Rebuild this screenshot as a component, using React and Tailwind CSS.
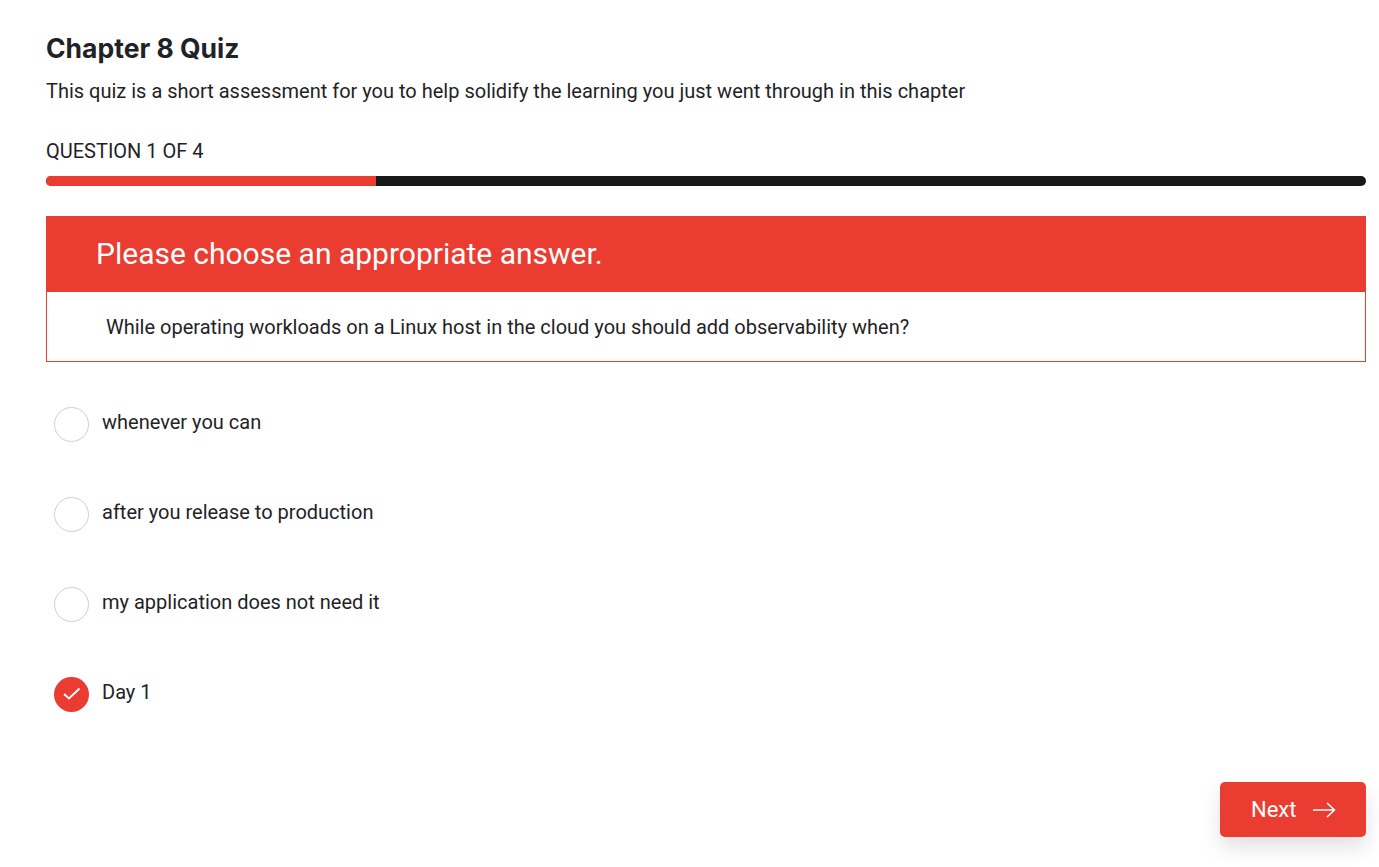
import React from "react";

const options = [
  { label: "whenever you can", checked: false },
  { label: "after you release to production", checked: false },
  { label: "my application does not need it", checked: false },
  { label: "Day 1", checked: true },
];

function Option({ label, checked }) {
  return (
    <div className="flex h-[90px] items-start pl-2">
      {checked ? (
        <span className="flex h-[35px] w-[35px] items-center justify-center rounded-full bg-[#ea3c30]">
          <svg width="20" height="20" viewBox="0 0 20 20" fill="none">
            <path d="M2 9 L7 13.5 L17.5 3.5" stroke="#fff" strokeWidth="2" />
          </svg>
        </span>
      ) : (
        <span className="h-[35px] w-[35px] rounded-full border border-[#cfcfcf] bg-white" />
      )}
      <span className="ml-[13px] -mt-[2px] text-[20px] leading-[35px] text-[#1f2328]">
        {label}
      </span>
    </div>
  );
}

export default function App() {
  return (
    <div className="min-h-[867px] bg-white pl-[46px] pr-[13px] pt-[29px] font-['Roboto',sans-serif]">
      <h1 className="font-['Inter',sans-serif] text-[26.5px] font-bold leading-[38px] text-[#1f2328]">
        Chapter 8 Quiz
      </h1>
      <p className="mt-[4px] text-[20px] leading-[40px] text-[#1f2328]">
        This quiz is a short assessment for you to help solidify the learning you just went through in this chapter
      </p>

      <p className="mt-[20px] text-[20px] leading-[40px] text-[#1f2328]">QUESTION 1 OF 4</p>
      <div className="mt-[5px] h-[10px] overflow-hidden rounded-[5px] bg-[#18191b]">
        <div className="h-full w-1/4 bg-[#ea3c30]" />
      </div>

      <div className="mt-[30px] flex h-[76px] items-center bg-[#ea3c30] pb-[2px] pl-[50px] text-[30px] text-white">
        Please choose an appropriate answer.
      </div>
      <div className="flex h-[70px] items-center border border-t-0 border-[#ea3c30] pl-[59px] text-[20px] text-[#1f2328]">
        While operating workloads on a Linux host in the cloud you should add observability when?
      </div>

      <div className="mt-[45px]">
        {options.map((o) => (
          <Option key={o.label} label={o.label} checked={o.checked} />
        ))}
      </div>

      <div className="mt-[15px] flex justify-end">
        <button className="flex h-[55px] w-[146px] items-center gap-[17px] rounded-[5px] bg-[#ea3c30] pl-[31px] text-[22px] text-white shadow-[0_10px_20px_rgba(0,0,0,0.12)]">
          Next
          <svg width="24" height="16" viewBox="0 0 24 16" fill="none">
            <path d="M0 8 H22 M14 1 L21.5 8 L14 15" stroke="#fff" strokeWidth="1.5" />
          </svg>
        </button>
      </div>
    </div>
  );
}
